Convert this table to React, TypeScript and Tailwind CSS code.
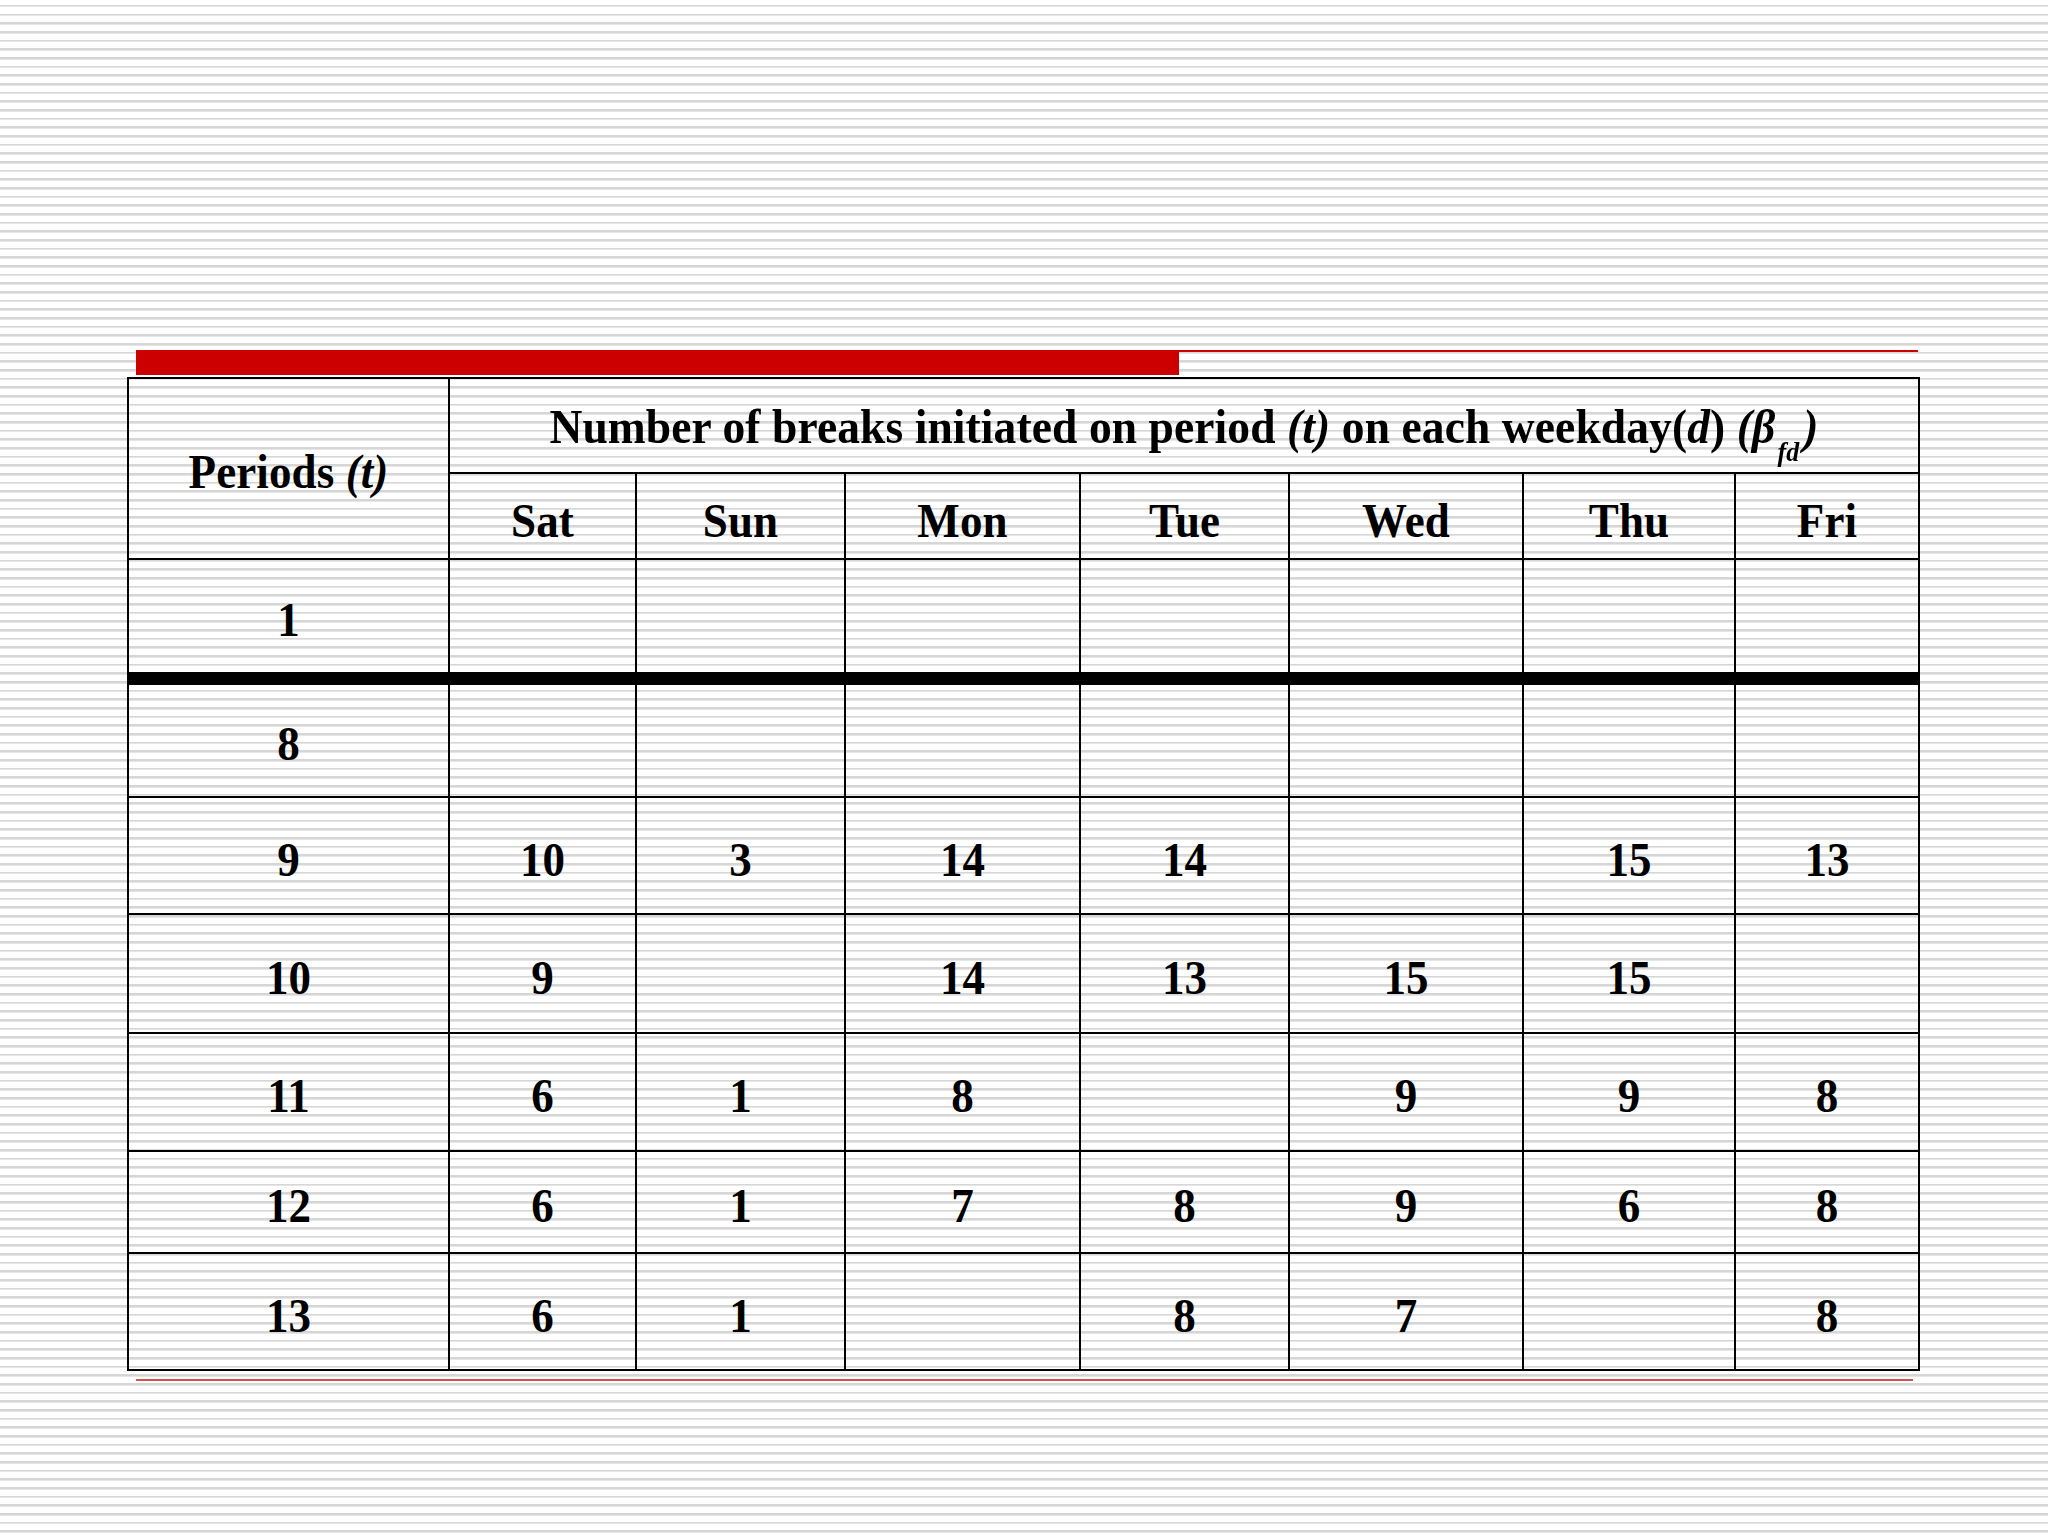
const days = ["Sat", "Sun", "Mon", "Tue", "Wed", "Thu", "Fri"]

// breaks per period, one value per weekday (Sat..Fri); "" = no entry
const rows: { period: string; values: string[]; height: string; thick?: boolean }[] = [
  { period: "1", values: ["", "", "", "", "", "", ""], height: "h-[119px]", thick: true },
  { period: "8", values: ["", "", "", "", "", "", ""], height: "h-[119px]" },
  { period: "9", values: ["10", "3", "14", "14", "", "15", "13"], height: "h-[117px]" },
  { period: "10", values: ["9", "", "14", "13", "15", "15", ""], height: "h-[119px]" },
  { period: "11", values: ["6", "1", "8", "", "9", "9", "8"], height: "h-[118px]" },
  { period: "12", values: ["6", "1", "7", "8", "9", "6", "8"], height: "h-[102px]" },
  { period: "13", values: ["6", "1", "", "8", "7", "", "8"], height: "h-[117px]" },
]

function Txt({ children }: { children: React.ReactNode }) {
  return <span className="inline-block scale-y-[1.08] tracking-[0.1px]">{children}</span>
}

export default function App() {
  return (
    <div className="w-[2048px] h-[1536px] overflow-hidden bg-white bg-[repeating-linear-gradient(180deg,#ffffff_0px,#ffffff_5px,#d6d6d6_5px,#d6d6d6_6.5px,#e6e6e6_6.5px,#e6e6e6_7.5px,#ffffff_7.5px,#ffffff_8.667px)] font-['Liberation_Serif',serif] text-black">
      <div className="flex flex-col pt-[350px] pl-[127px]">
        {/* title rule */}
        <div className="flex w-[1791px] pl-[9px]">
          <div className="w-[1043px] h-[25px] bg-[#cc0000]" />
          <div className="flex-1 h-[2px] bg-[#cc0000]" />
        </div>

        <table className="mt-[2px] w-[1791px] table-fixed border-collapse">
          <colgroup>
            <col className="w-[321px]" />
            <col className="w-[187px]" />
            <col className="w-[209px]" />
            <col className="w-[235px]" />
            <col className="w-[209px]" />
            <col className="w-[234px]" />
            <col className="w-[212px]" />
            <col className="w-[184px]" />
          </colgroup>
          <thead>
            <tr className="h-[95px]">
              <th
                rowSpan={2}
                className="border-[2.5px] border-black text-[45px] font-bold leading-none align-middle pt-[8px]"
              >
                <Txt>
                  Periods <i>(t)</i>
                </Txt>
              </th>
              <th
                colSpan={7}
                className="border-[2.5px] border-black text-[45.5px] font-bold leading-none align-middle pt-[2px]"
              >
                <Txt>
                  Number of breaks initiated on period <i>(t)</i> on each weekday(<i>d</i>){" "}
                  <i>
                    (β<sub className="text-[26px] relative top-[6px] align-sub pl-[2px] pr-[4px]">fd</sub>)
                  </i>
                </Txt>
              </th>
            </tr>
            <tr className="h-[86px]">
              {days.map((d) => (
                <th
                  key={d}
                  className="border-[2.5px] border-black text-[45px] font-bold leading-none align-middle pt-[10px]"
                >
                  <Txt>{d}</Txt>
                </th>
              ))}
            </tr>
          </thead>
          <tbody>
            {rows.map((r) => (
              <tr key={r.period} className={r.height}>
                <td
                  className={`border-[2.5px] border-black text-center text-[45px] font-bold leading-none align-middle pt-[9px] ${
                    r.thick ? "border-b-[13px]" : ""
                  }`}
                >
                  <Txt>{r.period}</Txt>
                </td>
                {r.values.map((v, i) => (
                  <td
                    key={i}
                    className={`border-[2.5px] border-black text-center text-[45px] font-bold leading-none align-middle pt-[9px] ${
                      r.thick ? "border-b-[13px]" : ""
                    }`}
                  >
                    {v && <Txt>{v}</Txt>}
                  </td>
                ))}
              </tr>
            ))}
          </tbody>
        </table>

        {/* footer rule */}
        <div className="mt-[8px] ml-[9px] w-[1777px] h-[2px] bg-[#d65050]" />
      </div>
    </div>
  )
}
